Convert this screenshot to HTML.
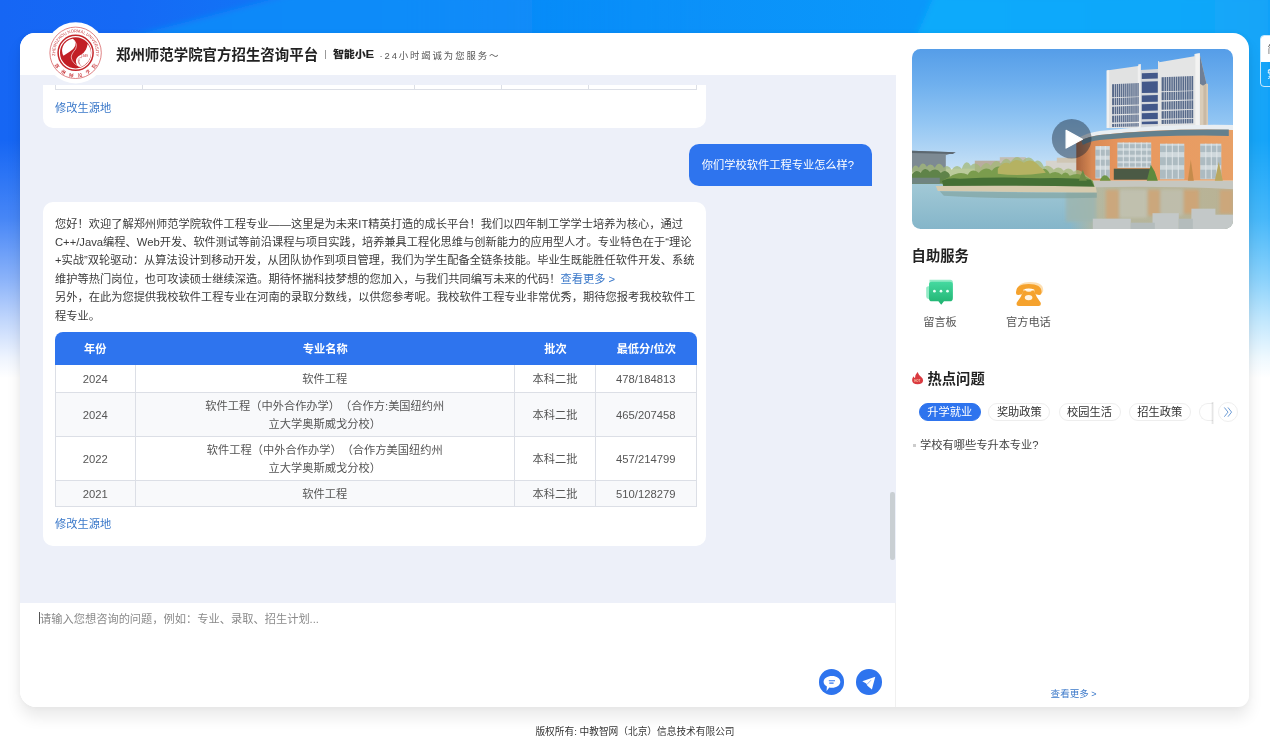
<!DOCTYPE html>
<html lang="zh-CN">
<head>
<meta charset="utf-8">
<title>郑州师范学院官方招生咨询平台</title>
<style>
*{box-sizing:border-box;margin:0;padding:0}
html,body{width:1270px;height:755px;overflow:hidden;background:#fff}
body{position:relative;will-change:transform;text-spacing-trim:space-all;font-family:"Liberation Sans","Noto Sans CJK SC",sans-serif;font-size:11.24px;color:#333;line-height:18.35px}
.abs{position:absolute}
#bg{left:0;top:0;width:1270px;height:420px}
#card{left:20px;top:33px;width:1229px;height:674px;border-radius:15px 16px 11px 16px;background:#fff;box-shadow:0 10px 15px rgba(0,0,0,.085),0 0 6px rgba(0,0,0,.04)}
#chat{left:20px;top:75px;width:876px;height:527.5px;background:#edf0f9;overflow:hidden}
#header{left:20px;top:33px;width:876px;height:42.4px;background:#fff;border-radius:15px 0 0 0}
#title{left:116px;top:44.2px;font-size:14.45px;font-weight:bold;color:#222;line-height:22px;white-space:nowrap}
#sep{left:325px;top:49.5px;width:1px;height:9px;background:#999}
#xe{left:333px;top:46.4px;font-size:9.9px;font-weight:900;color:#222;line-height:18px;white-space:nowrap;letter-spacing:-.2px;transform:scaleX(1.12);transform-origin:0 50%}
#slogan{left:379.5px;top:46.6px;font-size:9.4px;color:#555;line-height:18px;white-space:nowrap;letter-spacing:1.9px}
.bub{background:#fff;border-radius:10px}
#b1{left:42.5px;top:84.7px;width:663.5px;height:43px;border-radius:0 0 10px 10px}
#t1{left:55px;top:84.7px;width:642px;height:5px;border:1px solid #dcdfe6;border-top:0}
#t1 i{position:absolute;top:0;width:1px;height:4px;background:#dcdfe6}
#b2{left:42.5px;top:202.3px;width:663.5px;height:343.5px}
a.lnk{color:#3a78c9;text-decoration:none}
#ub{left:688.5px;top:144.2px;width:183.5px;height:41.6px;background:#2e74ee;border-radius:10px 10px 0 10px;color:#fff;padding:11.6px 0 0 13.3px;white-space:nowrap}
#txt{left:55px;top:214.8px;width:660px;color:#3b3b3b;white-space:nowrap}
table{border-collapse:separate;border-spacing:0;position:absolute;left:55px;top:332.4px;width:641.6px;table-layout:fixed;color:#555}
th{background:#2e74ee;color:#fff;font-weight:bold;height:32.5px;text-align:center;vertical-align:middle;padding-top:2px}
th:first-child{border-radius:8px 0 0 0}
th:last-child{border-radius:0 8px 0 0}
td{padding-top:2px;border-right:1px solid #dcdfe6;border-bottom:1px solid #dcdfe6;text-align:center;vertical-align:middle;line-height:17.2px}
td:first-child{border-left:1px solid #dcdfe6}
tr.g td{background:#f8f9fb}
#scroll{left:890.3px;top:492px;width:4.4px;height:68px;background:#c9cfd3;border-radius:2.2px}
#input{left:20px;top:602.5px;width:876px;height:104.5px;background:#fff;border-radius:0 0 0 16px;border-right:1px solid #f0f0f0}
#ph{left:40px;top:610.2px;color:#8a8a8a;white-space:nowrap}
#caret{left:38.6px;top:612.3px;width:1.4px;height:12px;background:#555}
.cbtn{width:25.6px;height:25.6px;border-radius:50%;background:#2e74ee}
#side h3{position:absolute;font-size:14.3px;font-weight:bold;color:#222;line-height:20px;white-space:nowrap}
.lab{position:absolute;color:#555;white-space:nowrap;transform:translateX(-50%)}
.tag{position:absolute;top:402.7px;height:18.6px;line-height:16.6px;border:1px solid #eee;border-radius:10px;padding:0 7.6px;color:#333;white-space:nowrap;background:#fff}
.tag.on{background:#2e74ee;border-color:#2e74ee;color:#fff}
#foot{left:0;top:723px;width:1270px;text-align:center;font-size:9.7px;color:#333;line-height:18px}
</style>
</head>
<body>
<svg id="bg" class="abs" viewBox="0 0 1270 420" preserveAspectRatio="none">
<defs>
<linearGradient id="gh" x1="0" x2="1" y1="0" y2="0"><stop offset="0" stop-color="#1666f4"/><stop offset=".1" stop-color="#1569f5"/><stop offset=".3" stop-color="#0f7ef7"/><stop offset=".5" stop-color="#0b8ff9"/><stop offset=".72" stop-color="#0a98fa"/><stop offset="1" stop-color="#0a9bfa"/></linearGradient>
<linearGradient id="gl" gradientUnits="userSpaceOnUse" x1="100" x2="700" y1="0" y2="0"><stop offset="0" stop-color="#0e86f9"/><stop offset=".5" stop-color="#0c8cf9"/><stop offset="1" stop-color="#0b91f9" stop-opacity="0"/></linearGradient>
<linearGradient id="grr" gradientUnits="userSpaceOnUse" x1="930" x2="1270" y1="0" y2="0"><stop offset="0" stop-color="#07aafb"/><stop offset=".7" stop-color="#0ca8fa"/><stop offset="1" stop-color="#18a5f8"/></linearGradient>
<linearGradient id="gv" x1="0" x2="0" y1="0" y2="1"><stop offset="0" stop-color="#fff" stop-opacity="0"/><stop offset=".333" stop-color="#fff" stop-opacity="0"/><stop offset=".52" stop-color="#fff" stop-opacity=".21"/><stop offset=".664" stop-color="#fff" stop-opacity=".5"/><stop offset=".76" stop-color="#fff" stop-opacity=".73"/><stop offset=".852" stop-color="#fff" stop-opacity=".93"/><stop offset=".9" stop-color="#fff" stop-opacity="1"/><stop offset="1" stop-color="#fff" stop-opacity="1"/></linearGradient>
<filter id="bb" x="-5%" y="-50%" width="110%" height="200%"><feGaussianBlur stdDeviation="3"/></filter>
</defs>
<rect width="1270" height="420" fill="url(#gh)"/>
<path d="M100 44 Q190 22 292 -6 L700 -6 L700 44Z" fill="url(#gl)" filter="url(#bb)"/>
<path d="M934 -5 L1270 -5 L1270 420 L900 420 L916 36Z" fill="url(#grr)" filter="url(#bb)"/>
<rect width="1270" height="420" fill="url(#gv)"/>
</svg>
<div id="card" class="abs"></div>
<div id="header" class="abs"></div>
<div id="chat" class="abs"></div>
<div id="b1" class="abs bub"></div>
<div id="t1" class="abs"><i style="left:86px"></i><i style="left:357.5px"></i><i style="left:444.5px"></i><i style="left:532px"></i></div>
<a class="lnk abs" style="left:55px;top:98.6px">修改生源地</a>
<div id="b2" class="abs bub"></div>
<div id="txt" class="abs">您好！欢迎了解郑州师范学院软件工程专业——这里是为未来IT精英打造的成长平台！我们以四年制工学学士培养为核心，通过<br>C++/Java编程、Web开发、软件测试等前沿课程与项目实践，培养兼具工程化思维与创新能力的应用型人才。专业特色在于“理论<br>+实战”双轮驱动：从算法设计到移动开发，从团队协作到项目管理，我们为学生配备全链条技能。毕业生既能胜任软件开发、系统<br>维护等热门岗位，也可攻读硕士继续深造。期待怀揣科技梦想的您加入，与我们共同编写未来的代码！<a class="lnk">查看更多 &gt;</a><br>另外，在此为您提供我校软件工程专业在河南的录取分数线，以供您参考呢。我校软件工程专业非常优秀，期待您报考我校软件工<br>程专业。</div>
<table>
<colgroup><col style="width:80.6px"><col style="width:379.4px"><col style="width:81px"><col style="width:100.6px"></colgroup>
<tr><th>年份</th><th>专业名称</th><th>批次</th><th>最低分/位次</th></tr>
<tr style="height:28.2px"><td>2024</td><td>软件工程</td><td>本科二批</td><td>478/184813</td></tr>
<tr class="g" style="height:44px"><td>2024</td><td>软件工程（中外合作办学）（合作方:美国纽约州<br>立大学奥斯威戈分校）</td><td>本科二批</td><td>465/207458</td></tr>
<tr style="height:44px"><td>2022</td><td>软件工程（中外合作办学）（合作方美国纽约州<br>立大学奥斯威戈分校）</td><td>本科二批</td><td>457/214799</td></tr>
<tr class="g" style="height:26px"><td>2021</td><td>软件工程</td><td>本科二批</td><td>510/128279</td></tr>
</table>
<a class="lnk abs" style="left:55px;top:514.6px">修改生源地</a>
<svg id="logo" class="abs" style="left:40px;top:17px;width:72px;height:72px" viewBox="40 17 72 72">
<defs><path id="arcT" d="M55.40 55.64 A20.4 20.4 0 1 1 95.80 55.64"/><path id="arcB" d="M54.38 65.05 A24.5 24.5 0 0 0 96.82 65.05"/></defs>
<circle cx="75.6" cy="52.8" r="30.6" fill="#fff"/>
<circle cx="75.6" cy="52.8" r="25.7" fill="none" stroke="#d45a5c" stroke-width=".75"/>
<circle cx="75.6" cy="52.8" r="17.5" fill="none" stroke="#c4262b" stroke-width="1.5"/>
<circle cx="75.6" cy="52.8" r="15.6" fill="#c21f25"/>
<g transform="translate(50 27) scale(.06887)" fill="#fff">
<path d="M330 172 Q385 215 365 275 Q345 325 285 360 Q230 395 196 418 Q160 350 185 285 Q225 195 330 172Z"/>
<path d="M548 248 Q612 335 590 425 Q560 530 460 578 Q410 590 392 548 Q362 500 388 455 Q402 420 442 405 Q495 380 520 330 Q540 290 548 248Z"/>
<path d="M340 182 Q405 245 372 320 Q300 400 310 450 Q330 530 410 565" fill="none" stroke="#fff" stroke-width="9"/>
<path d="M455 570 Q395 520 410 470 Q425 430 465 445 M430 540 Q410 500 430 470" fill="none" stroke="#c21f25" stroke-width="6"/>
</g>
<text font-family="Liberation Sans,sans-serif" font-size="3" fill="#c4262b" x="81" y="56.8" textLength="7" lengthAdjust="spacingAndGlyphs">1949</text>
<text font-family="Liberation Sans,sans-serif" font-size="4.3" fill="#c9373b" letter-spacing="0"><textPath href="#arcT" textLength="69.8" lengthAdjust="spacingAndGlyphs">ZHENGZHOU NORMAL UNIVERSITY</textPath></text>
<text font-family="Noto Serif CJK SC,serif" font-weight="700" font-size="4.6" fill="#c4262b"><textPath href="#arcB" textLength="51.3" lengthAdjust="spacing">郑州师范学院</textPath></text>
</svg>
<div id="title" class="abs">郑州师范学院官方招生咨询平台</div>
<div id="sep" class="abs"></div>
<div id="xe" class="abs">智能小<span style="font-size:11.6px;letter-spacing:0;line-height:0">E</span></div>
<div id="slogan" class="abs">·24小时竭诚为您服务～</div>
<div id="ub" class="abs">你们学校软件工程专业怎么样?</div>
<div id="scroll" class="abs"></div>
<div id="input" class="abs"></div>
<div id="ph" class="abs">请输入您想咨询的问题，例如：专业、录取、招生计划...</div>
<div id="caret" class="abs"></div>
<div id="side">
<svg id="photo" class="abs" style="left:912.2px;top:49.3px;width:321px;height:180.2px;border-radius:8.5px" viewBox="912.2 49.3 321 180.2" preserveAspectRatio="none">
<defs>
<linearGradient id="sky" x1="0" x2="0" y1="0" y2="1"><stop offset="0" stop-color="#559de8"/><stop offset=".3" stop-color="#6fb0ee"/><stop offset=".62" stop-color="#93c6f3"/><stop offset="1" stop-color="#c6e0f6"/></linearGradient>
<linearGradient id="wat" x1="0" x2="0" y1="0" y2="1"><stop offset="0" stop-color="#a2c9d6"/><stop offset="1" stop-color="#84b5c9"/></linearGradient>
<linearGradient id="refl" x1="0" x2="1" y1="0" y2="0"><stop offset="0" stop-color="#b7b79d" stop-opacity="0"/><stop offset=".18" stop-color="#b7b79d" stop-opacity=".95"/><stop offset="1" stop-color="#b9b294"/></linearGradient>
<linearGradient id="org" x1="0" x2="1" y1="0" y2="0"><stop offset="0" stop-color="#a8623c"/><stop offset=".1" stop-color="#d98a55"/><stop offset=".3" stop-color="#e9975e"/><stop offset="1" stop-color="#e8a066"/></linearGradient>
<filter id="bl" x="-5%" y="-5%" width="110%" height="110%"><feGaussianBlur stdDeviation=".6"/></filter>
<filter id="bl2" x="-10%" y="-10%" width="120%" height="120%"><feGaussianBlur stdDeviation="1.6"/></filter>
</defs>
<rect x="912" y="49" width="322" height="120" fill="url(#sky)"/>
<rect x="912" y="49" width="322" height="120" fill="#2f7fdc" opacity=".0"/>
<g filter="url(#bl)">
<!-- distant buildings -->
<path d="M912 151 L955 152.5 L946 155.5 L946 172 L912 172Z" fill="#7d8a93"/>
<path d="M912 151 L956 152.6 L953 154.2 L912 153.4Z" fill="#5c6770"/>
<rect x="975" y="161" width="38" height="12" fill="#b9ad9f"/>
<rect x="1000" y="157.5" width="26" height="6" fill="#c3bdb4"/>
<rect x="1046" y="161" width="34" height="16" fill="#d6d3cc"/>
<rect x="1057" y="158" width="22" height="5" fill="#cfc6b4"/>
</g>
<!-- water -->
<rect x="912" y="183.5" width="322" height="47" fill="url(#wat)"/>
<rect x="1070" y="186" width="164" height="44" fill="url(#refl)"/>
<g filter="url(#bl2)" opacity=".85">
<rect x="1106" y="190" width="13" height="30" fill="#cfa577"/>
<rect x="1148" y="190" width="12" height="26" fill="#cfa577"/>
<rect x="1184" y="190" width="15" height="24" fill="#d0a372"/>
<rect x="1220" y="190" width="13" height="24" fill="#cfa577"/>
<rect x="1120" y="190" width="27" height="28" fill="#c2c2b2"/>
<rect x="1161" y="190" width="22" height="26" fill="#c0bfae"/>
<rect x="1066" y="192" width="30" height="30" fill="#9db5b0"/>
</g>
<!-- tower -->
<g filter="url(#bl)">
<path d="M1200 55 L1206.6 83.8 L1208.2 84.4 L1208.2 128 L1200 128Z" fill="#d9ccb8"/>
<path d="M1200 55 L1206.6 83.8 L1203.4 86 L1200 84Z" fill="#6f7f95"/>
<path d="M1203.6 86 L1206.6 84 L1206.6 128 L1203.6 128Z" fill="#c9b9a4"/>
<path d="M1106.9 70.7 L1138.5 66.2 L1138.5 64.6 L1140.9 64.3 L1140.9 128.4 L1106.9 128.4Z" fill="#e1e2e2"/>
<path d="M1140.9 70.4 L1158.2 69.4 L1158.2 128.4 L1140.9 128.4Z" fill="#d3d7db"/>
<path d="M1158.2 61.5 L1159.4 61.3 L1159.4 62.6 L1194.6 56.6 L1194.6 54.4 L1200 53.6 L1200 128.4 L1158.2 128.4Z" fill="#e4e5e5"/>
<path d="M1106.9 70.7 L1109.4 70.3 L1109.4 128.4 L1106.9 128.4Z" fill="#f1f1f1"/>
<path d="M1195.6 54.3 L1200 53.6 L1200 128.4 L1195.6 128.4Z" fill="#f3f3f2"/>
<path d="M1138 66.2 L1140.9 64.3 L1140.9 128.4 L1138 128.4Z" fill="#efefef"/>
<g fill="#586a8a"><path d="M1112.3 84.6 L1138.9 83.39999999999999 L1138.9 96.8 L1112.3 97.5Z"/><path d="M1112.3 98.6 L1138.9 97.39999999999999 L1138.9 104.9 L1112.3 105.6Z"/><path d="M1112.3 107 L1138.9 105.8 L1138.9 113.9 L1112.3 114.6Z"/><path d="M1112.3 116 L1138.9 114.8 L1138.9 122.0 L1112.3 122.7Z"/><path d="M1112.3 124.4 L1138.9 123.2 L1138.9 126.7 L1112.3 127.4Z"/></g>
<g fill="#43598a"><path d="M1142 73.6 L1158 73.1 L1158 78.9 L1142 79.2Z"/><path d="M1142 82 L1158 81.5 L1158 93.0 L1142 93.3Z"/><path d="M1142 95.7 L1158 95.2 L1158 102.0 L1142 102.3Z"/><path d="M1142 104.6 L1158 104.1 L1158 110.9 L1142 111.2Z"/><path d="M1142 113.6 L1158 113.1 L1158 119.2 L1142 119.5Z"/><path d="M1142 122 L1158 121.5 L1158 124.2 L1142 124.5Z"/></g>
<g fill="#566989"><path d="M1161.8 77.6 L1193.4 76.19999999999999 L1193.4 90.7 L1161.8 91.5Z"/><path d="M1161.8 92.6 L1193.4 91.19999999999999 L1193.4 99.7 L1161.8 100.5Z"/><path d="M1161.8 102 L1193.4 100.6 L1193.4 109.2 L1161.8 110Z"/><path d="M1161.8 111.5 L1193.4 110.1 L1193.4 118.2 L1161.8 119Z"/><path d="M1161.8 120.4 L1193.4 119.0 L1193.4 123.6 L1161.8 124.4Z"/></g>
<g fill="#e3e5e8" opacity=".85"><rect x="1114.3" y="83" width=".75" height="45"/><rect x="1116.4" y="83" width=".75" height="45"/><rect x="1118.4" y="83" width=".75" height="45"/><rect x="1120.5" y="83" width=".75" height="45"/><rect x="1122.5" y="83" width=".75" height="45"/><rect x="1124.6" y="83" width=".75" height="45"/><rect x="1126.6" y="83" width=".75" height="45"/><rect x="1128.7" y="83" width=".75" height="45"/><rect x="1130.7" y="83" width=".75" height="45"/><rect x="1132.8" y="83" width=".75" height="45"/><rect x="1134.8" y="83" width=".75" height="45"/><rect x="1136.9" y="83" width=".75" height="45"/><rect x="1164.0" y="75" width=".75" height="50"/><rect x="1166.3" y="75" width=".75" height="50"/><rect x="1168.5" y="75" width=".75" height="50"/><rect x="1170.8" y="75" width=".75" height="50"/><rect x="1173.0" y="75" width=".75" height="50"/><rect x="1175.3" y="75" width=".75" height="50"/><rect x="1177.5" y="75" width=".75" height="50"/><rect x="1179.8" y="75" width=".75" height="50"/><rect x="1182.0" y="75" width=".75" height="50"/><rect x="1184.3" y="75" width=".75" height="50"/><rect x="1186.5" y="75" width=".75" height="50"/><rect x="1188.8" y="75" width=".75" height="50"/><rect x="1191.0" y="75" width=".75" height="50"/></g>
</g>
<!-- rotunda -->
<g filter="url(#bl)">
<path d="M1076.5 141 Q1082 136.2 1092 134.6 Q1160 127.4 1234 128.4 L1234 181 L1076.5 181Z" fill="url(#org)"/>
<path d="M1079 138.4 Q1086 133 1100 131.2 Q1165 124 1234 125.2 L1234 130.2 Q1165 128.6 1100 135.2 Q1088 136.8 1081 140.6Z" fill="#e9eef2"/>
<path d="M1081.5 141 Q1088 136.8 1100 135.2 Q1165 128.6 1229 129.9 L1229 136.2 Q1165 134.8 1100 140.4 Q1090 141.6 1083 145.4Z" fill="#64808d"/>
<g fill="#cfd8dc">
<rect x="1095.6" y="146.4" width="14.4" height="32.4"/>
<rect x="1117.6" y="142.8" width="33.8" height="25.4"/>
<rect x="1160.2" y="144" width="24.3" height="35.6"/>
<rect x="1200.4" y="144" width="21.1" height="35.6"/>
</g>
<g fill="#8da0a8" opacity=".5">
<rect x="1095.6" y="150" width="14.4" height="6"/><rect x="1095.6" y="160" width="14.4" height="6"/><rect x="1095.6" y="170" width="14.4" height="8"/>
<rect x="1117.6" y="144.5" width="33.8" height="4"/><rect x="1117.6" y="151" width="33.8" height="4"/><rect x="1117.6" y="157.5" width="33.8" height="4"/><rect x="1117.6" y="163.5" width="33.8" height="3.4"/>
<rect x="1160.2" y="146" width="24.3" height="6.4"/><rect x="1160.2" y="157.5" width="24.3" height="8"/><rect x="1160.2" y="170" width="24.3" height="9"/>
<rect x="1200.4" y="146" width="21.1" height="6.4"/><rect x="1200.4" y="157.5" width="21.1" height="8"/><rect x="1200.4" y="170" width="21.1" height="9"/>
</g>
<g fill="#e3e9ec" opacity=".9">
<rect x="1100" y="146.4" width="1" height="32"/><rect x="1105" y="146.4" width="1" height="32"/>
<rect x="1123" y="142.8" width="1" height="25"/><rect x="1129" y="142.8" width="1" height="25"/><rect x="1135" y="142.8" width="1" height="25"/><rect x="1141" y="142.8" width="1" height="25"/><rect x="1146.5" y="142.8" width="1" height="25"/>
<rect x="1166" y="144" width="1" height="35"/><rect x="1172" y="144" width="1" height="35"/><rect x="1178" y="144" width="1" height="35"/>
<rect x="1205.5" y="144" width="1" height="35"/><rect x="1211" y="144" width="1" height="35"/><rect x="1216.5" y="144" width="1" height="35"/>
</g>
<rect x="1114" y="169" width="37" height="11" fill="#4c5a44"/>
</g>
<!-- sidewalk -->
<path d="M1085 181 L1234 181 L1234 189.5 Q1160 186 1096 187.6 L1085 186Z" fill="#c6c7c0" filter="url(#bl)"/>
<!-- trees -->
<g filter="url(#bl)">
<path d="M912 170 Q915 163 919 168 Q923 160 927 167 Q931 162 935 168 Q939 160 944 168 Q948 164 952 170 Q957 163 962 169 Q966 158 971 166 Q976 161 981 168 Q986 160 991 166 Q996 158 1001 164 Q1006 155 1011 162 Q1017 153 1023 161 Q1029 154 1035 162 Q1040 158 1044 167 Q1049 164 1054 170 Q1059 165 1064 171 Q1069 166 1074 172 Q1079 168 1084 174 L1092 180 L912 180Z" fill="#a3b878" opacity=".75"/>
<path d="M912 175 Q916 169 921 173 Q925 166 930 172 Q936 167 941 173 Q946 169 950 175 L950 184 L912 184Z" fill="#5f8348"/>
<path d="M950 177 Q960 171 968 175 Q972 168 979 173 Q986 166 992 171 Q998 164 1004 169 Q1010 162 1016 167 Q1024 160 1030 167 Q1036 162 1042 170 Q1046 167 1050 174 Q1056 170 1062 175 Q1066 170 1070 176 Q1078 172 1086 177 L1093 181 L1095 188 L944 188 L942 181Z" fill="#7a9c4e"/>
<path d="M998 169 Q1004 161 1010 164 Q1016 157 1024 163 Q1032 157 1040 167 Q1044 169 1046 173 Q1020 177 998 174Z" fill="#b5b262"/>
<path d="M942 181 Q950 177.5 960 179 Q1000 177 1040 178.6 Q1070 177.6 1091 180 L1095 188 L944 188Z" fill="#456f36"/>
<path d="M912 178 L940 178 L940 184 L912 184Z" fill="#6f8480"/>
<path d="M936 186.4 Q1010 185.4 1096 187 L1097 192.8 Q1010 192.4 938 191.2Z" fill="#d6cbae"/>
<path d="M940 191.6 Q1010 192.6 1097 193 L1097 198 Q1010 200 944 196Z" fill="#7f9f9a" opacity=".6"/>
<path d="M1147 181 L1151 165 L1155 172 L1158 181Z" fill="#5d8a3e"/>
<path d="M1100 181 Q1104 172 1109 178 L1111 181Z" fill="#6e9547"/>
<path d="M1188 181 L1191 160 L1194 181Z" fill="#c68b4c"/>
<path d="M1215 181 L1219 162 L1223 181Z" fill="#b9a760"/>
<path d="M1079 181 L1083 170 L1087 181Z" fill="#6d8d47"/>
</g>
<!-- stones -->
<g filter="url(#bl)" fill="#c3c8c8">
<rect x="1093" y="219" width="38" height="11"/>
<rect x="1152.7" y="213.5" width="26.3" height="17"/>
<rect x="1191.6" y="209" width="24" height="21"/>
<rect x="1215" y="215" width="19" height="15"/>
<rect x="1131" y="223" width="24" height="7" fill="#b4bcbc"/>
<rect x="1179" y="219" width="14" height="11" fill="#b4bcbc"/>
</g>
<circle cx="1071.9" cy="139" r="19.8" fill="#1c2a38" opacity=".46"/>
<path d="M1066.3 130.7 L1082.6 139.5 L1066.3 148.4Z" fill="#fff" stroke="#fff" stroke-width="1.2" stroke-linejoin="round"/>
</svg>
<h3 style="left:911.6px;top:245.6px">自助服务</h3>
<div class="lab" style="left:940px;top:313px">留言板</div>
<div class="lab" style="left:1028.4px;top:313px">官方电话</div>
<h3 style="left:927.5px;top:368.5px">热点问题</h3>
<div class="tag on" style="left:918.7px">升学就业</div>
<div class="tag" style="left:988.3px">奖助政策</div>
<div class="tag" style="left:1058.5px">校园生活</div>
<div class="tag" style="left:1128.7px">招生政策</div>
<div class="tag" style="left:1199px;width:14px;border-right:0;border-radius:10px 0 0 10px;padding:0"></div>
<div class="abs" style="left:1210.6px;top:401.7px;width:3px;height:22px;background:linear-gradient(90deg,rgba(0,0,0,0),rgba(0,0,0,.1),rgba(0,0,0,.02))"></div>
<div class="abs" style="left:1218.3px;top:402px;width:20px;height:20px;border-radius:50%;border:1px solid #efefef;background:#fff"></div>
<div class="abs" style="left:913px;top:444px;width:2.5px;height:2.5px;background:#ccc"></div>
<div class="abs" style="left:920px;top:436px;color:#444;white-space:nowrap">学校有哪些专升本专业?</div>
<a class="lnk abs" style="left:1050.6px;top:685px;font-size:9.55px;white-space:nowrap">查看更多<span style="font-size:9px"> &gt;</span></a>
</div>
<div class="cbtn abs" style="left:818.8px;top:669.2px"></div>
<div class="cbtn abs" style="left:856.3px;top:669.2px"></div>
<svg class="abs" style="left:920px;top:272px;width:130px;height:40px" viewBox="920 272 130 40">
<defs><linearGradient id="gg" x1="0" x2="0" y1="0" y2="1"><stop offset="0" stop-color="#45d9a0"/><stop offset="1" stop-color="#1fb26f"/></linearGradient></defs>
<path d="M929.5 279.8 H950.2 Q952.9 279.8 952.9 282.4 V296.5 Q952.9 299 950.2 299 H928.6 Q926.2 299 926.2 296.6 V288 Q926.2 286.6 927.6 286.4 L929.5 286Z" fill="#93ebc6"/>
<path d="M931.8 281.7 H950 Q952.8 281.7 952.8 284.5 V298.4 Q952.8 301.2 950 301.2 H944 L941.2 304.8 L938.4 301.2 H931.8 Q929 301.2 929 298.4 V284.5 Q929 281.7 931.8 281.7Z" fill="url(#gg)"/>
<circle cx="934.4" cy="291.2" r="1.35" fill="#e9fff5"/><circle cx="941" cy="291.2" r="1.35" fill="#e9fff5"/><circle cx="947.5" cy="291.2" r="1.35" fill="#e9fff5"/>
<g transform="translate(1.6 -2)" fill="#fde0b4">
<path d="M1016 292 Q1016 284 1028.7 284 Q1041.6 284 1041.6 292 V293 Q1041.2 295.2 1039 295 L1035.4 294.2 Q1034.2 291.5 1034.2 289.4 Q1028.7 287.8 1023.4 289.4 Q1023.4 291.5 1022.2 294.2 L1018.4 295 Q1016 295.2 1016 293Z"/>
</g>
<g fill="#f5a22d">
<path d="M1016 292 Q1016 284 1028.7 284 Q1041.6 284 1041.6 292 V293 Q1041.2 295.2 1039 295 L1035.4 294.2 Q1034.2 291.5 1034.2 289.4 Q1028.7 287.8 1023.4 289.4 Q1023.4 291.5 1022.2 294.2 L1018.4 295 Q1016 295.2 1016 293Z"/>
<path d="M1023.6 290.4 H1034 Q1036.6 298 1040.6 302.6 Q1041.6 305.8 1038.6 305.9 H1018.8 Q1015.8 305.8 1016.8 302.6 Q1020.8 298 1023.6 290.4Z"/>
</g>
<ellipse cx="1028.6" cy="297.6" rx="3.8" ry="2.6" fill="#fff4e2"/>
<ellipse cx="1028.8" cy="290.6" rx="3" ry="1.2" fill="#fff4e2"/>
</svg>
<svg class="abs" style="left:910px;top:370px;width:16px;height:16px" viewBox="910 370 16 16">
<path d="M917.6 372 Q918.6 375 921 376.8 Q923.2 378.6 923.1 380.4 Q922.8 384.2 917.6 384.2 Q912.3 384.2 912.1 380.2 Q912 378 913.6 376.2 Q914 377.6 915 378 Q915.2 374.4 917.6 372Z" fill="#da3a40"/>
<text x="914.2" y="382.3" font-family="Liberation Sans,sans-serif" font-size="2.9" font-weight="bold" fill="#f7c9a8">HOT</text>
</svg>
<svg class="abs" style="left:1218px;top:402px;width:21px;height:21px" viewBox="1218 402 21 21">
<path d="M1224.6 407.8 L1228 412.1 L1224.6 416.4 M1228.2 407.8 L1231.6 412.1 L1228.2 416.4" fill="none" stroke="#5b90d0" stroke-width=".9" stroke-linecap="round" stroke-linejoin="round"/>
</svg>
<svg class="abs" style="left:818px;top:668px;width:66px;height:28px" viewBox="818 668 66 28">
<path d="M832 675.9 C836.8 675.9 840.3 678.4 840.3 681.8 C840.3 685.2 836.8 687.8 832 687.8 C831 687.8 830.1 687.7 829.3 687.5 L826.6 691 L826.9 686.4 C824.9 685.4 823.6 683.7 823.6 681.8 C823.6 678.4 827.2 675.9 832 675.9Z" fill="#fff"/>
<path d="M828.8 680.7 H835 M829.3 683.1 H833.6" stroke="#2e74ee" stroke-width="1.1" fill="none"/>
<path d="M862.3 681.3 L875.3 676.8 L871.9 689.4 L867.4 685.8 L866.2 683.6Z" fill="#fff"/>
<path d="M871 680.2 L866.8 684.6" fill="none" stroke="#2e74ee" stroke-width=".55"/>
</svg>
<div class="abs" style="left:1260px;top:35.3px;width:20px;height:51.6px;border-radius:4px;overflow:hidden;border:1px solid rgba(255,255,255,.75)">
<div style="position:absolute;left:0;top:0;width:20px;height:25.4px;background:#fff"></div>
<div style="position:absolute;left:6.4px;top:7.4px;font-size:10px;line-height:12px;color:#666">简</div>
<div style="position:absolute;left:6.2px;top:33px;font-size:10px;line-height:12px;color:#fff">繁</div>
</div>
<div id="foot" class="abs">版权所有: 中教智网（北京）信息技术有限公司</div>
</body>
</html>
